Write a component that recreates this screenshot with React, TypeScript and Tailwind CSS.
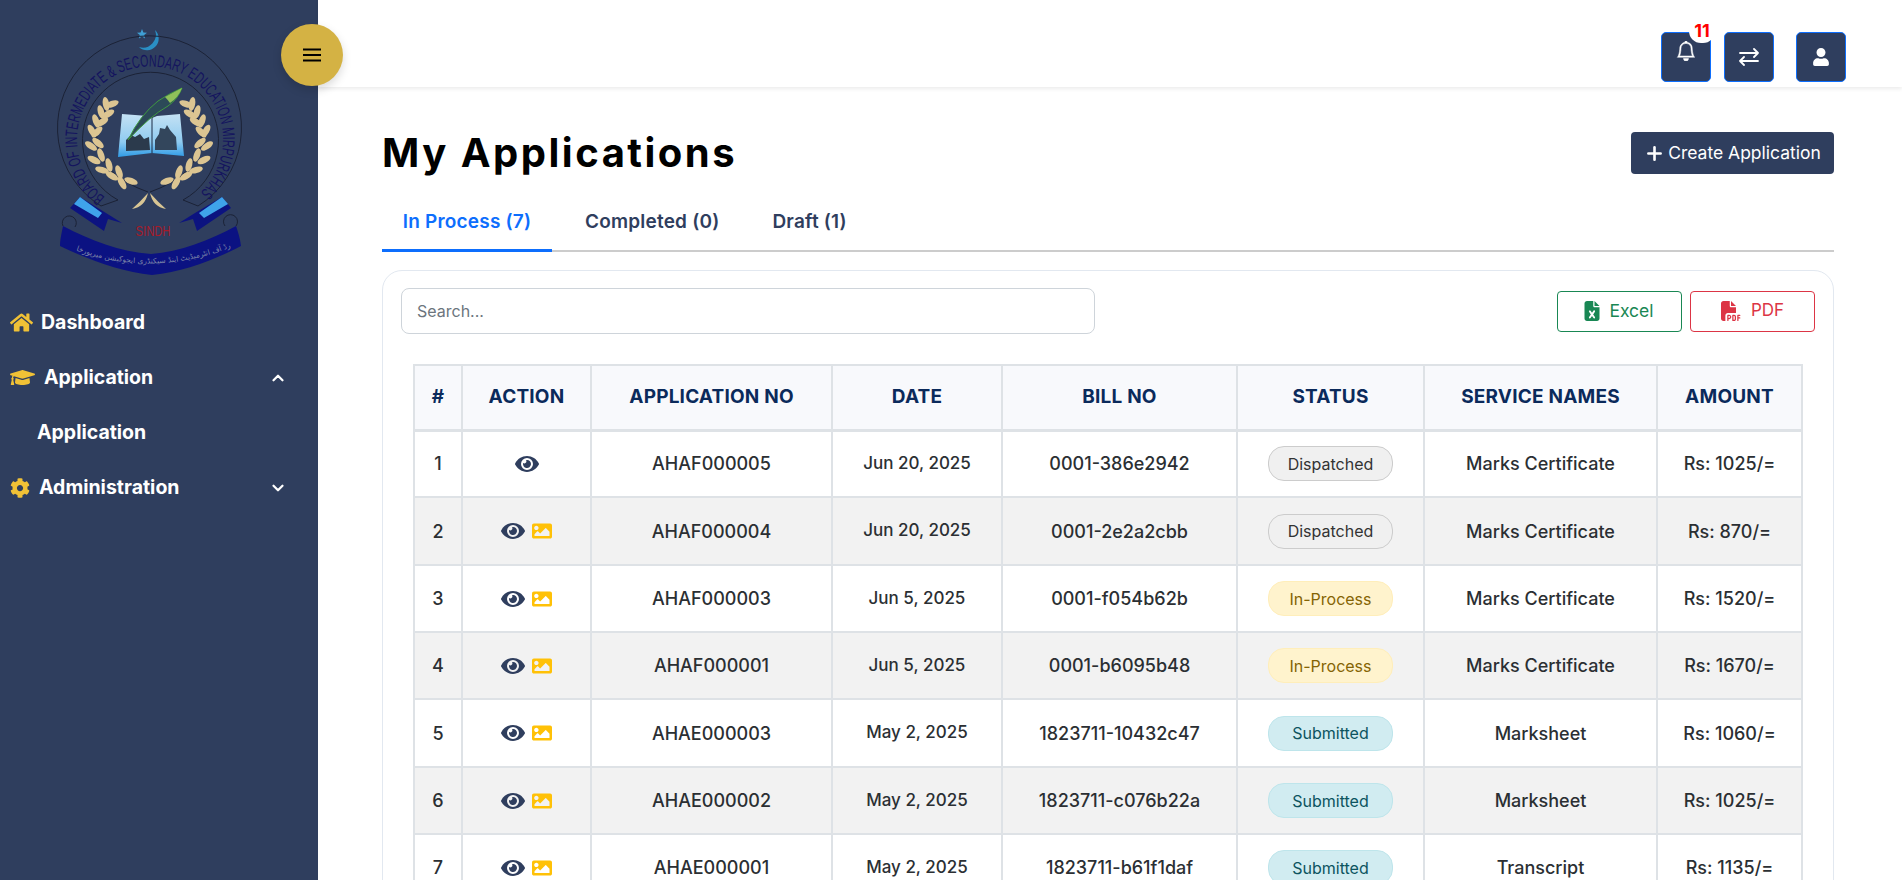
import { FaHome, FaGraduationCap, FaCog, FaEye, FaImage, FaUser } from 'react-icons/fa';
import { FaFileExcel, FaFilePdf } from 'react-icons/fa6';
import { FiChevronDown, FiChevronUp, FiPlus } from 'react-icons/fi';
import { BsBell } from 'react-icons/bs';

const rows = [
    { no: 'AHAF000005', date: 'Jun 20, 2025', bill: '0001-386e2942', status: 'Dispatched', service: 'Marks Certificate', amount: 'Rs: 1025/=', image: false },
    { no: 'AHAF000004', date: 'Jun 20, 2025', bill: '0001-2e2a2cbb', status: 'Dispatched', service: 'Marks Certificate', amount: 'Rs: 870/=', image: true },
    { no: 'AHAF000003', date: 'Jun 5, 2025', bill: '0001-f054b62b', status: 'In-Process', service: 'Marks Certificate', amount: 'Rs: 1520/=', image: true },
    { no: 'AHAF000001', date: 'Jun 5, 2025', bill: '0001-b6095b48', status: 'In-Process', service: 'Marks Certificate', amount: 'Rs: 1670/=', image: true },
    { no: 'AHAE000003', date: 'May 2, 2025', bill: '1823711-10432c47', status: 'Submitted', service: 'Marksheet', amount: 'Rs: 1060/=', image: true },
    { no: 'AHAE000002', date: 'May 2, 2025', bill: '1823711-c076b22a', status: 'Submitted', service: 'Marksheet', amount: 'Rs: 1025/=', image: true },
    { no: 'AHAE000001', date: 'May 2, 2025', bill: '1823711-b61f1daf', status: 'Submitted', service: 'Transcript', amount: 'Rs: 1135/=', image: true },
];

const columns = [
    { label: '#', className: 'w-[48px]' },
    { label: 'Action', className: 'w-[129px]' },
    { label: 'Application No', className: 'w-[241px]' },
    { label: 'Date', className: 'w-[170px]' },
    { label: 'Bill No', className: 'w-[235px]' },
    { label: 'Status', className: 'w-[187px]' },
    { label: 'Service Names', className: 'w-[233px]' },
    { label: 'Amount', className: 'w-[145px]' },
];

const statusStyles: Record<string, string> = {
    Dispatched: 'bg-[#f0f0f0] border-[#cccccc] text-[#333333]',
    'In-Process': 'bg-[#fff3cd] border-[#ffeeba] text-[#856404]',
    Submitted: 'bg-[#d1ecf1] border-[#bee5eb] text-[#0c5460]',
};

const cell = 'border-2 border-[#dee2e6] text-center text-[18px] font-medium text-[#2b2f33]';

// leaves along one laurel branch, left side of the crest
const leaves = [
    [131, 181, 20], [122, 183, 60], [119, 172, 70], [112, 176, 30], [109, 165, 75], [102, 170, 15],
    [101, 155, 70], [94, 160, 25], [98, 143, 40], [91, 146, 35], [97, 132, 135], [92, 131, 60],
    [102, 122, 150], [96, 121, 70], [108, 114, 150], [101, 112, 75], [112, 104, 160], [106, 104, 80],
];

function Laurel() {
    return (
        <>
            <path d="M 148 192 Q 125 184 110 170 Q 94 150 97 130 Q 99 116 110 104" fill="none" stroke="#1b2236" strokeWidth="1" />
            {leaves.map(([x, y, r], i) => (
                <ellipse key={i} cx={x} cy={y} rx="7" ry="3.2" fill="#dcc592" transform={`rotate(${r} ${x} ${y})`} />
            ))}
            <path d="M 148 193 Q 140 202 132 209 Q 145 207 148 193 Z" fill="#d8c594" />
        </>
    );
}

function Crest() {
    return (
        <svg width="318" height="295" viewBox="0 0 318 295" className="block">
            <defs>
                <linearGradient id="bookFill" x1="0" y1="0" x2="0" y2="1">
                    <stop offset="0" stopColor="#c4e1f4" />
                    <stop offset="0.65" stopColor="#8fcbf0" />
                    <stop offset="1" stopColor="#2f9be6" />
                </linearGradient>
                <path id="crestRing" d="M 105 197 A 73 73 0 1 1 195 197" />
                <path id="crestRibbon" d="M 72 249 Q 150 279 232 247" />
            </defs>

            {/* crescent and star */}
            <path d="M 155 30 A 11.5 11.5 0 1 1 139 47 A 13 13 0 0 0 155 30 Z" fill="#2a8fc4" />
            <path d="M142 29l1.4 3.4 3.6.3-2.8 2.3.9 3.6-3.1-2-3.1 2 .9-3.6-2.8-2.3 3.6-.3z" fill="#3f9fd4" />

            {/* ring */}
            <path d="M 101 206 A 92 92 0 1 1 198 206" fill="none" stroke="#1b2236" strokeWidth="1" />
            <path d="M 118 200 A 68 68 0 1 1 183 200" fill="none" stroke="#1b2236" strokeWidth="1" />
            <path d="M 101 206 L 118 200 M 198 206 L 183 200" stroke="#1b2236" strokeWidth="1" />
            <text fontFamily="'Liberation Sans', sans-serif" fontSize="17" fill="#14145e">
                <textPath href="#crestRing" textLength="354" lengthAdjust="spacingAndGlyphs">
                    BOARD OF INTERMEDIATE &amp; SECONDARY EDUCATION MIRPURKHAS
                </textPath>
            </text>

            {/* laurel */}
            <Laurel />
            <g transform="matrix(-1 0 0 1 298 0)">
                <Laurel />
            </g>

            {/* book */}
            <path d="M 122 114 L 148 116 L 152 118 L 157 116 L 180 114 L 184 156 L 152 153 L 118 157 Z" fill="url(#bookFill)" />
            <path d="M 126 151 L 126 140 L 131 135 L 135 137 L 140 134 L 144 139 L 149 137 L 150 150 Z" fill="#2b3a4c" />
            <path d="M 155 150 L 155 140 L 159 134 L 160 128 L 165 129 L 167 125 L 170 130 L 176 137 L 177 150 Z" fill="#33465c" />
            <path d="M 152 117 L 152 153" stroke="#1b2b44" strokeWidth="1" />

            {/* quill */}
            <path d="M 128 140 Q 140 115 158 101 Q 170 93 182 88 Q 178 99 168 106 Q 150 116 128 140 Z" fill="#2c4a58" stroke="#3f9a3f" strokeWidth="1" />
            <path d="M 182 88 Q 174 92 165 97 Q 168 100 170 103 Q 178 98 182 88 Z" fill="#8fc05a" />

            {/* side ribbons */}
            <path d="M 80 197 L 70 208 L 104 231 L 108 219 L 122 223 L 106 213 Z" fill="#0c1380" />
            <path d="M 80 197 L 74 204 L 98 218 L 102 213 Z" fill="#3fa3ea" />
            <path d="M 222 197 L 231 208 L 197 231 L 193 219 L 179 223 L 195 213 Z" fill="#0c1380" />
            <path d="M 222 197 L 228 204 L 204 218 L 199 213 Z" fill="#3fa3ea" />

            <text x="153" y="236" textAnchor="middle" fontFamily="'Liberation Sans', sans-serif" fontSize="14" fill="#a51b2a" textLength="35" lengthAdjust="spacingAndGlyphs">
                SINDH
            </text>

            {/* bottom scroll */}
            <path d="M 63 226 C 61 236 60 240 60 246 C 85 258 120 272 152 275 C 185 272 218 258 241 246 C 240 238 238 232 236 226 C 210 240 180 252 151 254 C 120 252 90 240 63 226 Z" fill="#0b1282" />
            <path d="M 63 226 A 7 7 0 1 1 75 227 M 236 226 A 7 7 0 1 0 225 226" fill="none" stroke="#1b2236" strokeWidth="1" />
            <text fontFamily="'DejaVu Sans', sans-serif" fontSize="7.5" fill="#7c84a8" textAnchor="middle">
                <textPath href="#crestRibbon" startOffset="50%">
                    بورڈ آف انٹرمیڈیٹ اینڈ سیکنڈری ایجوکیشن میرپورخاص
                </textPath>
            </text>
        </svg>
    );
}

function Sidebar() {
    return (
        <aside className="w-[318px] h-full shrink-0 bg-[#2f3e5e] text-white">
            <Crest />
            <nav className="text-[19.5px] font-bold">
                <div className="h-[55px] flex items-center pl-[10px]">
                    <FaHome className="text-[#f0c136] text-[23px] mr-[8px]" />
                    <span>Dashboard</span>
                </div>
                <div className="h-[55px] flex items-center pl-[10px] pr-[31px]">
                    <FaGraduationCap className="text-[#f0c136] text-[25px] mr-[9px]" />
                    <span className="flex-1">Application</span>
                    <FiChevronUp className="text-[18px] stroke-[3]" />
                </div>
                <div className="h-[55px] flex items-center pl-[37px]">Application</div>
                <div className="h-[55px] flex items-center pl-[10px] pr-[31px]">
                    <FaCog className="text-[#f0c136] text-[20px] mr-[9px]" />
                    <span className="flex-1">Administration</span>
                    <FiChevronDown className="text-[18px] stroke-[3]" />
                </div>
            </nav>
        </aside>
    );
}

function TopBar() {
    return (
        <header className="h-[87px] shrink-0 bg-white shadow-[0_2px_4px_rgba(0,0,0,0.08)] flex items-start justify-end pt-[32px] pr-[56px] relative">
            <button className="relative w-[50px] h-[50px] rounded-[5px] bg-[#2f3e5e] border border-[#0d6efd] text-white flex justify-center pt-[8px] mr-[13px]">
                <BsBell className="text-[20px] stroke-white stroke-[0.4px]" />
                <span className="absolute -top-[14px] -right-[5px] w-[26px] h-[24px] rounded-full bg-white text-[#ff0000] text-[18px] font-bold leading-[24px] text-center">11</span>
            </button>
            <button className="w-[50px] h-[50px] rounded-[5px] bg-[#2f3e5e] border border-[#0d6efd] text-white flex items-center justify-center mr-[22px]">
                <svg width="20" height="18" viewBox="0 0 20 18" fill="none" stroke="currentColor" strokeWidth="1.8" strokeLinecap="round" strokeLinejoin="round">
                    <path d="M1 5h18M15 1l4 4-4 4" />
                    <path d="M19 13H1M5 9l-4 4 4 4" />
                </svg>
            </button>
            <button className="w-[50px] h-[50px] rounded-[5px] bg-[#2f3e5e] border border-[#0d6efd] text-white flex items-center justify-center">
                <FaUser className="text-[18px]" />
            </button>
        </header>
    );
}

export default function App() {
    return (
        <div className="h-screen flex overflow-hidden bg-white relative font-['Inter',sans-serif]">
            <Sidebar />
            <button className="absolute left-[281px] top-[24px] z-10 w-[62px] h-[62px] rounded-full bg-[#d4b244] shadow-[0_4px_10px_rgba(0,0,0,0.15)] flex items-center justify-center text-black">
                <svg width="18" height="14" viewBox="0 0 18 14" stroke="currentColor" strokeWidth="2">
                    <path d="M0 1.5h18M0 7h18M0 12.5h18" />
                </svg>
            </button>

            <div className="flex-1 min-w-0 flex flex-col">
                <TopBar />
                <main className="flex-1 overflow-hidden pl-[64px] pr-[68px]">
                    <div className="flex items-center justify-between pt-[25px] h-[107px]">
                        <h1 className="text-[40px] font-bold tracking-[2.5px] text-black leading-none">My Applications</h1>
                        <button className="h-[42px] w-[203px] rounded-[4px] bg-[#2f3e5e] text-white text-[17.5px] flex items-center justify-center gap-[3px]">
                            <FiPlus className="text-[21px] stroke-[3]" />
                            Create Application
                        </button>
                    </div>

                    <div className="flex h-[58px] border-b-2 border-[#cccccc] text-[19px] tracking-[0.2px] font-semibold">
                        <div className="w-[170px] text-center text-[#0d6efd] border-b-[3px] border-[#0d6efd] -mb-[2px] pt-[14px]">In Process (7)</div>
                        <div className="ml-[33px] text-[#2f3e5e] pt-[14px]">Completed (0)</div>
                        <div className="ml-[53px] text-[#2f3e5e] pt-[14px]">Draft (1)</div>
                    </div>

                    <div className="mt-[18px] border border-[#e2e8f0] rounded-[20px] pt-[17px] px-[18px] pb-[20px]">
                        <div className="flex items-center justify-between">
                            <input
                                placeholder="Search..."
                                className="w-[694px] h-[46px] border border-[#ced4da] rounded-[8px] px-[15px] text-[16px] placeholder:text-[#6c757d] outline-none"
                            />
                            <div className="flex gap-[8px]">
                                <button className="w-[125px] h-[41px] rounded-[4px] border border-[#198754] text-[#198754] text-[17.5px] flex items-center justify-center gap-[7px] pr-[3px]">
                                    <FaFileExcel className="text-[20px]" />
                                    Excel
                                </button>
                                <button className="w-[125px] h-[41px] rounded-[4px] border border-[#dc3545] text-[#dc3545] text-[17px] flex items-center justify-center gap-[10px]">
                                    <FaFilePdf className="text-[20px]" />
                                    PDF
                                </button>
                            </div>
                        </div>

                        <div className="mt-[30px] px-[12px]">
                            <table className="w-[1388px] table-fixed border-collapse">
                                <thead>
                                    <tr className="h-[65px] bg-[#f8f9fc]">
                                        {columns.map((col) => (
                                            <th key={col.label} className={`${col.className} border-2 border-[#dee2e6] border-b-[3px] text-[19px] font-bold uppercase tracking-[0.2px] text-[#0b2a5b] text-center`}>
                                                {col.label}
                                            </th>
                                        ))}
                                    </tr>
                                </thead>
                                <tbody>
                                    {rows.map((row, index) => (
                                        <tr key={row.no} className={`${index % 3 === 1 ? 'h-[68px]' : 'h-[67px]'} ${index % 2 === 1 ? 'bg-[#f2f2f2]' : 'bg-white'}`}>
                                            <td className={cell}>{index + 1}</td>
                                            <td className="border-2 border-[#dee2e6]">
                                                <div className="flex items-center justify-center gap-[7px]">
                                                    <FaEye className="text-[24px] text-[#2f3e5e]" />
                                                    {row.image && <FaImage className="text-[20px] text-[#ffc107]" />}
                                                </div>
                                            </td>
                                            <td className={cell}>{row.no}</td>
                                            <td className="border-2 border-[#dee2e6] text-center text-[17px] font-medium text-[#2b2f33]">{row.date}</td>
                                            <td className={cell}>{row.bill}</td>
                                            <td className="border-2 border-[#dee2e6]">
                                                <span className={`mx-auto flex items-center justify-center w-[125px] h-[35px] rounded-[16px] border text-[16px] ${statusStyles[row.status]}`}>
                                                    {row.status}
                                                </span>
                                            </td>
                                            <td className={cell}>{row.service}</td>
                                            <td className={cell}>{row.amount}</td>
                                        </tr>
                                    ))}
                                </tbody>
                            </table>
                        </div>
                    </div>
                </main>
            </div>
        </div>
    );
}
